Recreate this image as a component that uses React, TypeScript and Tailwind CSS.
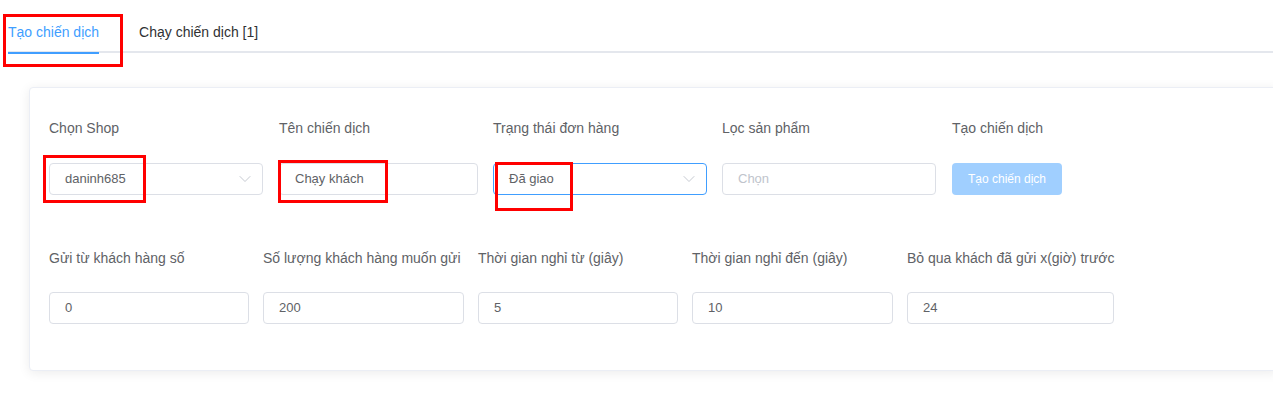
import { ChevronDown } from "lucide-react";

interface FieldProps {
  label: string;
  width: string;
  children: React.ReactNode;
}

function Field({ label, width, children }: FieldProps) {
  return (
    <div className={`flex flex-col shrink-0 ${width}`}>
      <div className="h-5 leading-5 text-[14px] text-[#606266] whitespace-nowrap">{label}</div>
      <div className="mt-[25px]">{children}</div>
    </div>
  );
}

function TextBox({ value, placeholder }: { value?: string; placeholder?: string }) {
  return (
    <div className="h-8 w-full rounded border border-[#dcdfe6] bg-white px-[15px] flex items-center text-[13px]">
      {value ? (
        <span className="text-[#606266]">{value}</span>
      ) : (
        <span className="text-[#c0c4cc]">{placeholder}</span>
      )}
    </div>
  );
}

function SelectBox({ value, focused }: { value: string; focused?: boolean }) {
  return (
    <div
      className={`h-8 w-full rounded border bg-white pl-[15px] pr-[7px] flex items-center justify-between text-[13px] ${
        focused ? "border-[#409eff]" : "border-[#dcdfe6]"
      }`}
    >
      <span className="text-[#606266]">{value}</span>
      <ChevronDown size={20} strokeWidth={1.1} className="text-[#c0c4cc]" />
    </div>
  );
}

export default function App() {
  const row2 = [
    { label: "Gửi từ khách hàng số", value: "0", width: "w-[200px]" },
    { label: "Số lượng khách hàng muốn gửi", value: "200", width: "w-[201px]" },
    { label: "Thời gian nghỉ từ (giây)", value: "5", width: "w-[200px]" },
    { label: "Thời gian nghỉ đến (giây)", value: "10", width: "w-[201px]" },
    { label: "Bỏ qua khách đã gửi x(giờ) trước", value: "24", width: "w-[207px]" },
  ];

  return (
    <div
      className="relative w-[1273px] h-[416px] overflow-hidden bg-white pl-2"
      style={{ fontFamily: '"Liberation Sans", Arial, sans-serif' }}
    >
      {/* tabs */}
      <div className="pt-3 flex border-b-2 border-[#e4e7ed] h-[53px]">
        <div className="relative h-10 leading-10 text-[14px] text-[#409eff] pr-5">
          Tạo chiến dịch
          <div className="absolute left-0 right-5 -bottom-[2px] h-[2px] bg-[#409eff]" />
        </div>
        <div className="h-10 leading-10 text-[14px] text-[#303133] pl-5">Chạy chiến dịch [1]</div>
      </div>

      {/* card */}
      <div className="ml-[21px] mt-[34px] w-[1250px] rounded border border-[#ebeef5] bg-white shadow-[0_2px_12px_0_rgba(0,0,0,0.08)] pl-[19px] pt-[30px] pb-[46px]">
        <div className="flex">
          <Field label="Chọn Shop" width="w-[214px]">
            <SelectBox value="daninh685" />
          </Field>
          <div className="ml-4">
            <Field label="Tên chiến dịch" width="w-[199px]">
              <TextBox value="Chạy khách" />
            </Field>
          </div>
          <div className="ml-[15px]">
            <Field label="Trạng thái đơn hàng" width="w-[214px]">
              <SelectBox value="Đã giao" focused />
            </Field>
          </div>
          <div className="ml-[15px]">
            <Field label="Lọc sản phẩm" width="w-[214px]">
              <TextBox placeholder="Chọn" />
            </Field>
          </div>
          <div className="ml-4">
            <Field label="Tạo chiến dịch" width="w-[110px]">
              <button className="h-8 w-[110px] rounded bg-[#a0cfff] text-white text-[12px] font-normal">
                Tạo chiến dịch
              </button>
            </Field>
          </div>
        </div>

        <div className="flex gap-[14px] mt-[53px]">
          {row2.map((f) => (
            <div key={f.label} className={`flex flex-col shrink-0 ${f.width}`}>
              <div className="h-5 leading-5 text-[14px] text-[#606266] whitespace-nowrap">{f.label}</div>
              <div className="mt-[24px]">
                <TextBox value={f.value} />
              </div>
            </div>
          ))}
        </div>
      </div>

      {/* red annotation boxes */}
      <div className="absolute left-[3px] top-[14px] w-[120px] h-[53px] border-[3px] border-[#ff0000]" />
      <div className="absolute left-[43px] top-[155px] w-[103px] h-[48px] border-[3px] border-[#ff0000]" />
      <div className="absolute left-[278px] top-[160px] w-[110px] h-[43px] border-[3px] border-[#ff0000]" />
      <div className="absolute left-[495px] top-[162px] w-[78px] h-[49px] border-[3px] border-[#ff0000]" />
    </div>
  );
}
